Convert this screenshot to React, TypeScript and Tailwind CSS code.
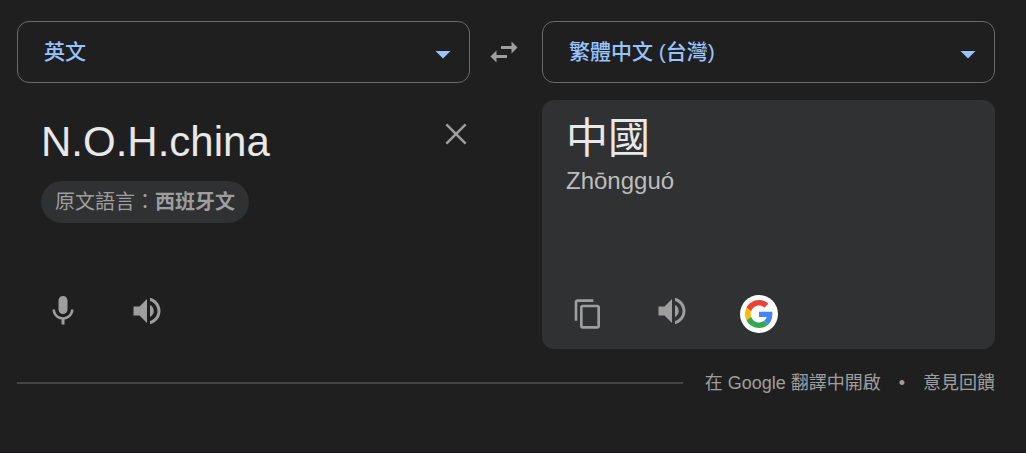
import React, { useState } from 'react';
import { MdContentCopy, MdMic, MdSwapHoriz, MdVolumeUp } from 'react-icons/md';

interface LanguageSelectProps {
  label: string;
  value: string;
  options: string[];
  onChange: (value: string) => void;
}

const LanguageSelect: React.FC<LanguageSelectProps> = ({ label, value, options, onChange }) => (
  <div className="relative min-w-0 flex-1">
    <select
      aria-label={label}
      value={value}
      onChange={(e) => onChange(e.target.value)}
      className="block h-[62px] w-full appearance-none rounded-xl border border-[#6b6b6b] bg-transparent pr-12 pl-[26px] text-[21px] font-medium text-[#99c3ff] focus:outline-none"
    >
      {options.map((option) => (
        <option key={option}>{option}</option>
      ))}
    </select>
    <svg viewBox="0 0 16 8" className="pointer-events-none absolute top-[30px] right-[19px] h-2 w-4 fill-[#99c3ff]">
      <path d="M0.5 0h15L8 7.5z" />
    </svg>
  </div>
);

const SpeakButton: React.FC = () => (
  <button aria-label="聆聽" className="pb-1.5">
    <MdVolumeUp className="size-9" />
  </button>
);

const GoogleLogo: React.FC = () => (
  <svg viewBox="0 0 48 48" className="size-7">
    <path fill="#EA4335" d="M24 9.5c3.54 0 6.71 1.22 9.21 3.6l6.85-6.85C35.9 2.38 30.47 0 24 0 14.62 0 6.51 5.38 2.56 13.22l7.98 6.19C12.43 13.72 17.74 9.5 24 9.5z" />
    <path fill="#4285F4" d="M46.98 24.55c0-1.57-.15-3.09-.38-4.55H24v9.02h12.94c-.58 2.96-2.26 5.48-4.78 7.18l7.73 6c4.51-4.18 7.09-10.36 7.09-17.65z" />
    <path fill="#FBBC05" d="M10.53 28.59c-.48-1.45-.76-2.99-.76-4.59s.27-3.14.76-4.59l-7.98-6.19C.92 16.46 0 20.12 0 24c0 3.88.92 7.54 2.56 10.78l7.97-6.19z" />
    <path fill="#34A853" d="M24 48c6.48 0 11.93-2.13 15.89-5.81l-7.73-6c-2.15 1.45-4.92 2.3-8.16 2.3-6.26 0-11.57-4.22-13.47-9.91l-7.98 6.19C6.51 42.62 14.62 48 24 48z" />
  </svg>
);

const App: React.FC = () => {
  const [source, setSource] = useState('英文');
  const [target, setTarget] = useState('繁體中文 (台灣)');
  const [text, setText] = useState('N.O.H.china');

  return (
    <main
      lang="zh-Hant"
      className="min-h-screen border-b border-[#17121a] bg-[#1f1f1f] pt-[21px] pr-[31px] pl-[17px] font-['Liberation_Sans','Noto_Sans_CJK_TC',sans-serif] text-[#9e9e9e]"
    >
      <div className="flex items-center">
        <LanguageSelect label="原文語言" value={source} options={['英文', '西班牙文']} onChange={setSource} />
        <button aria-label="切換語言" className="flex w-[72px] justify-center pr-1">
          <MdSwapHoriz className="size-9" />
        </button>
        <LanguageSelect label="譯文語言" value={target} options={['繁體中文 (台灣)', '英文']} onChange={setTarget} />
      </div>

      <div className="mt-[17px] grid grid-cols-2 gap-[72px]">
        <section className="flex h-[249px] flex-col items-start pb-3.5 pl-6">
          <div className="flex w-full items-start pt-4">
            <textarea
              aria-label="輸入文字"
              rows={1}
              value={text}
              onChange={(e) => setText(e.target.value)}
              className="block h-[52px] min-w-0 flex-1 resize-none bg-transparent text-[42px] leading-[52px] text-[#e8e8e8] focus:outline-none"
            />
            <button aria-label="清除" className="-mr-1" onClick={() => setText('')}>
              <svg viewBox="0 0 28 28" className="size-9 fill-none stroke-[#9e9e9e] stroke-2">
                <path d="M6.5 6.5l15 15M21.5 6.5l-15 15" />
              </svg>
            </button>
          </div>
          <button
            onClick={() => setSource('西班牙文')}
            className="mt-[13px] h-[42px] rounded-full bg-[#303132] px-3.5 text-xl"
          >
            原文語言：<b>西班牙文</b>
          </button>
          <div className="mt-auto flex items-start gap-12 pl-1">
            <button aria-label="語音輸入">
              <MdMic className="size-9" />
            </button>
            <SpeakButton />
          </div>
        </section>

        <section className="flex h-[249px] flex-col rounded-xl bg-[#303132] pt-[13px] pr-6 pb-3.5 pl-6">
          <p className="text-[42px] leading-[52px] text-[#e8e8e8]">中國</p>
          <p className="text-2xl text-[#bdbdbd]">Zhōngguó</p>
          <div className="mt-auto flex items-center gap-[50px] pl-1.5">
            <button aria-label="複製">
              <MdContentCopy className="size-8" />
            </button>
            <SpeakButton />
            <button aria-label="Google 搜尋" className="flex size-[38px] items-center justify-center rounded-full bg-white">
              <GoogleLogo />
            </button>
          </div>
        </section>
      </div>

      <footer className="mt-5 flex items-center gap-[22px] text-lg">
        <hr className="flex-1 border-t-2 border-[#444444]" />
        <div className="flex items-center gap-[18px]">
          <a href="#translate">在 Google 翻譯中開啟</a>
          <span>•</span>
          <a href="#feedback">意見回饋</a>
        </div>
      </footer>
    </main>
  );
};

export default App;
